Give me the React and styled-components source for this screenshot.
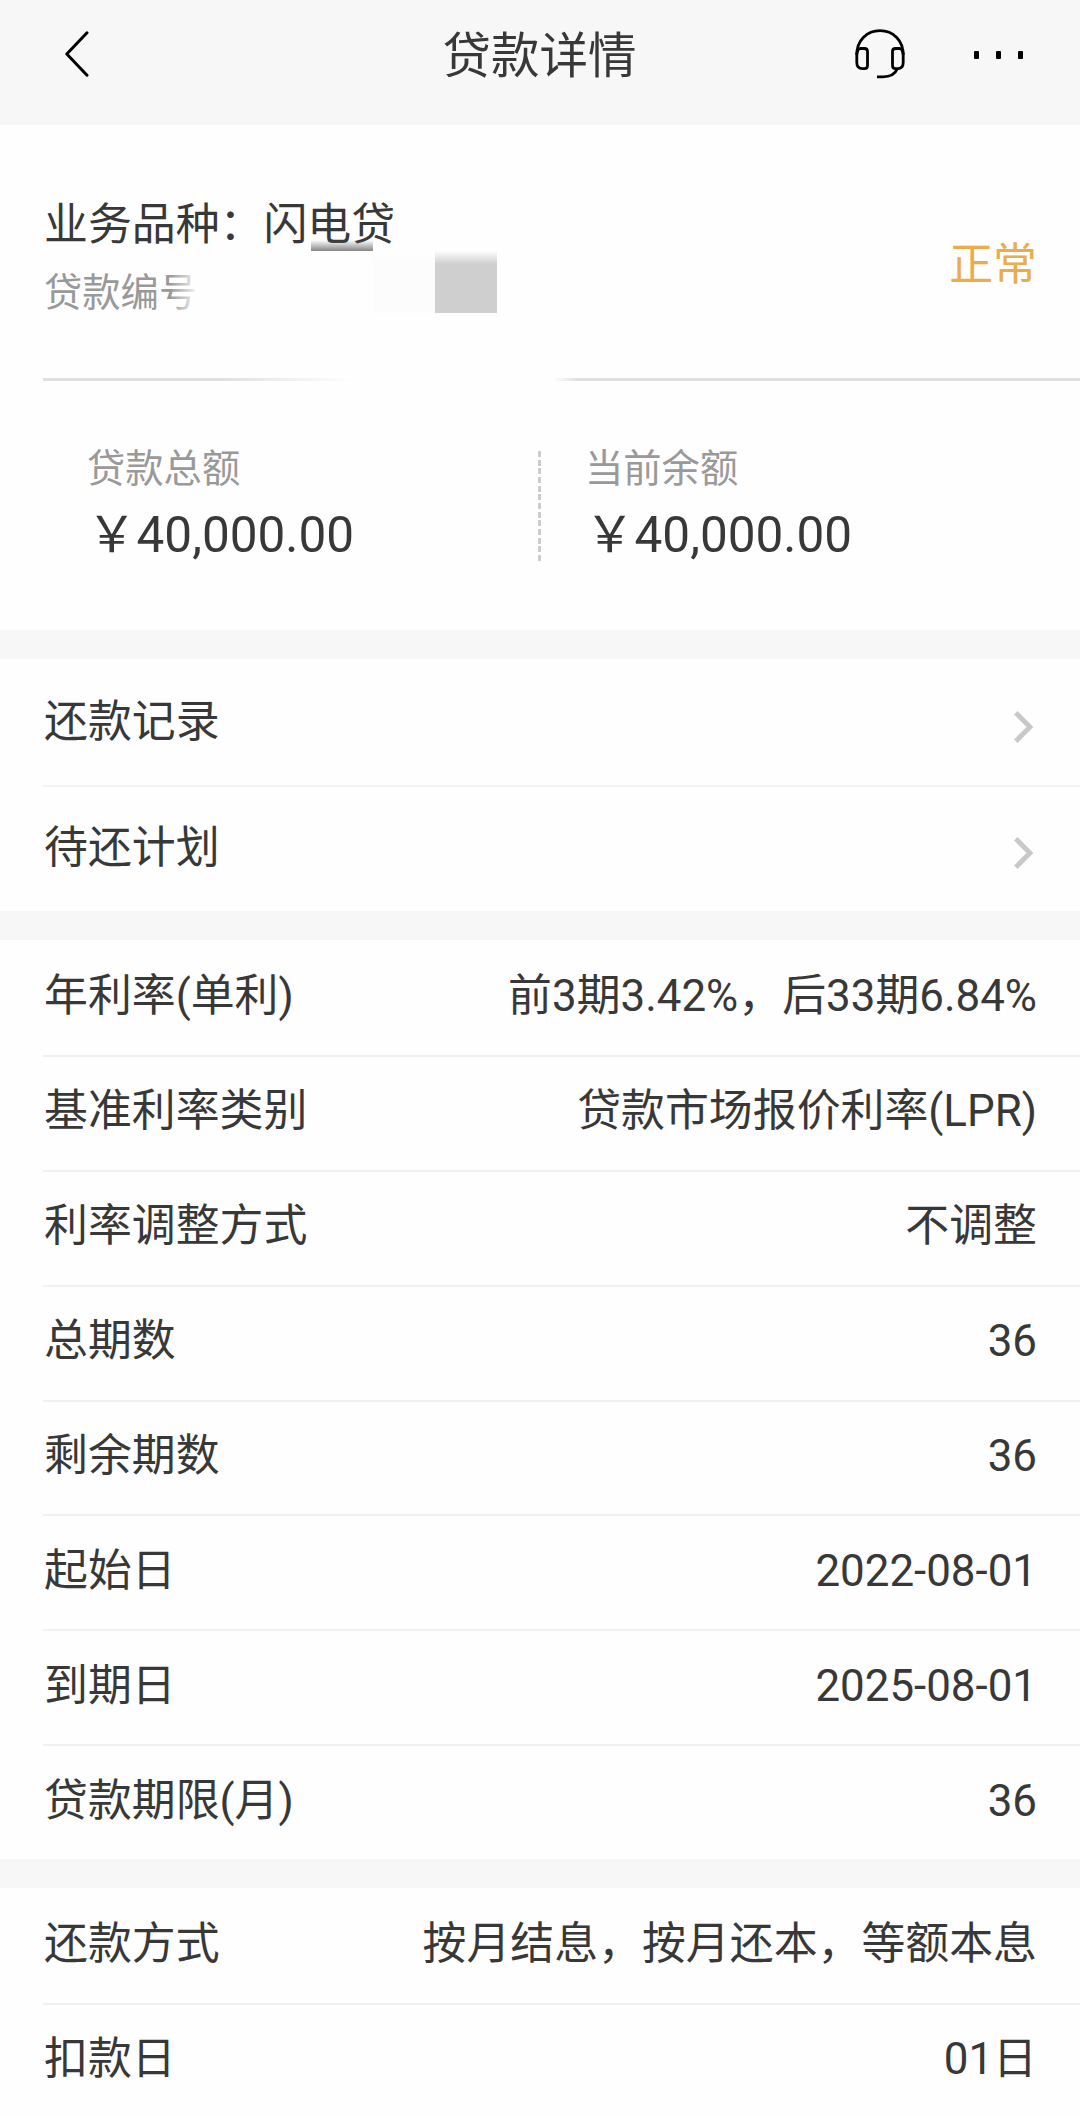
import React from 'react'
import styled, { createGlobalStyle } from 'styled-components'

const rateRows = [
  { label: '年利率(单利)', value: '前3期3.42%，后33期6.84%' },
  { label: '基准利率类别', value: '贷款市场报价利率(LPR)' },
  { label: '利率调整方式', value: '不调整' },
  { label: '总期数', value: '36' },
  { label: '剩余期数', value: '36' },
  { label: '起始日', value: '2022-08-01' },
  { label: '到期日', value: '2025-08-01' },
  { label: '贷款期限(月)', value: '36' },
]

const repayRows = [
  { label: '还款方式', value: '按月结息，按月还本，等额本息' },
  { label: '扣款日', value: '01日' },
]

const BackIcon = () => (
  <svg width="24" height="46" viewBox="0 0 24 46" fill="none" stroke="#000" strokeWidth="3" strokeLinecap="round" strokeLinejoin="round">
    <path d="M22 1.8L1.8 23L22 44.2" />
  </svg>
)

const HeadsetIcon = () => (
  <svg width="50" height="50" viewBox="0 0 50 50" fill="none" stroke="#000" strokeWidth="2.8" strokeLinejoin="round">
    <path d="M1.8 26C1.8 11 12 1.6 25 1.6S48.2 11 48.2 26" />
    <path d="M5.5 19.5H9.5Q12.5 19.5 12.5 22.5V36.5Q12.5 39.6 9.5 39.6H7.5Q1.8 39.6 1.8 33.5V24.5Q2.6 19.5 5.5 19.5Z" />
    <path d="M44.5 19.5H40.5Q37.5 19.5 37.5 22.5V36.5Q37.5 39.6 40.5 39.6H42.5Q48.2 39.6 48.2 33.5V24.5Q47.4 19.5 44.5 19.5Z" />
    <path d="M42.5 39.5C40 45.5 35 47.8 28 47.8H22" />
  </svg>
)

const ChevronIcon = () => (
  <svg width="20" height="32" viewBox="0 0 20 32" fill="none" stroke="#c8c8c8" strokeWidth="4.8">
    <path d="M1.8 1.8L16 16L1.8 30.2" />
  </svg>
)

const DetailList = ({ rows }) => (
  <Section>
    {rows.map((row) => (
      <Row key={row.label}>
        <span>{row.label}</span>
        <span>{row.value}</span>
      </Row>
    ))}
  </Section>
)

const App = () => {
  return (
    <Page>
      <GlobalStyle />
      <Header>
        <BackButton><BackIcon /></BackButton>
        <Title>贷款详情</Title>
        <Actions>
          <HeadsetIcon />
          <MoreDots><i /><i /><i /></MoreDots>
        </Actions>
      </Header>

      <Summary>
        <div>
          <Product>业务品种：闪电贷</Product>
          <LoanNo>贷款编号</LoanNo>
        </div>
        <Status>正常</Status>
        <TextSmudge />
        <Fade />
        <Block $left="373px" $color="#fcfcfc" />
        <Block $left="435px" $color="#cfcfcf" />
      </Summary>

      <Amounts>
        <Amount>
          <AmountLabel>贷款总额</AmountLabel>
          <Money>￥40,000.00</Money>
        </Amount>
        <DashedLine />
        <Amount>
          <AmountLabel>当前余额</AmountLabel>
          <Money>￥40,000.00</Money>
        </Amount>
      </Amounts>

      <Section>
        <LinkRow><span>还款记录</span><ChevronIcon /></LinkRow>
        <LinkRow><span>待还计划</span><ChevronIcon /></LinkRow>
      </Section>
      <DetailList rows={rateRows} />
      <DetailList rows={repayRows} />
    </Page>
  )
}

const GlobalStyle = createGlobalStyle`
  * {
    box-sizing: border-box;
  }
  body {
    margin: 0;
    background-color: #fefefe;
  }
`;

const Page = styled.div`
  width: 1080px;
  height: 2116px;
  overflow: hidden;
  background-color: #fefefe;
  color: #383838;
  font-family: Roboto, "Noto Sans CJK SC", sans-serif;
  font-size: 43.9px;
  line-height: 60px;
  white-space: nowrap;
`;

const Header = styled.header`
  display: grid;
  grid-template-columns: 1fr auto 1fr;
  align-items: center;
  height: 125px;
  padding: 0 57px 18px 65px;
  background-color: #f7f7f7;
`;

const BackButton = styled.div`
  display: flex;
`;

const Title = styled.h1`
  margin: 7px 0 0 -9px;
  font-size: 48.5px;
  font-weight: 400;
`;

const Actions = styled.div`
  display: flex;
  justify-content: flex-end;
  align-items: center;
  gap: 69px;
`;

const MoreDots = styled.div`
  display: flex;
  gap: 17px;
  padding-top: 2px;
  i {
    width: 5px;
    height: 8px;
    border-radius: 1px;
    background-color: #000;
  }
`;

const Summary = styled.section`
  position: relative;
  display: flex;
  justify-content: space-between;
  height: 253px;
  padding: 70px 43px 0 44px;
`;

const Product = styled.div`
  height: 68px;
`;

const LoanNo = styled.div`
  font-size: 38.3px;
  color: #999;
`;

const Status = styled.div`
  padding-top: 40px;
  color: #e9ad4c;
`;

/* mosaic pieces hiding the loan number */
const TextSmudge = styled.div`
  position: absolute;
  left: 311px;
  top: 115px;
  width: 62px;
  height: 11px;
  background: linear-gradient(rgba(120, 120, 120, 0), rgba(120, 120, 120, 0.9));
`;

const Fade = styled.div`
  position: absolute;
  left: 170px;
  top: 142px;
  width: 40px;
  height: 46px;
  background: linear-gradient(to right, rgba(254, 254, 254, 0), #fefefe 75%);
`;

const Block = styled.div`
  position: absolute;
  left: ${({ $left }) => $left};
  top: 126px;
  width: 62px;
  height: 62px;
  background: linear-gradient(#fefefe, ${({ $color }) => $color} 13px);
`;

const Amounts = styled.section`
  display: flex;
  height: 252px;
  padding-top: 71px;
  background: linear-gradient(to right, #e0e0e0 180px, #fefefe 310px, #fefefe 510px, #e0e0e0 535px) 43px 0 / 100% 3px no-repeat;
`;

const Amount = styled.div`
  width: 451px;
  margin-left: 87px;
  &:last-child {
    margin-left: 44px;
  }
`;

const AmountLabel = styled.div`
  height: 56px;
  font-size: 38.3px;
  line-height: 40px;
  color: #999;
`;

const Money = styled.div`
  font-size: 49.5px;
`;

const DashedLine = styled.div`
  width: 3px;
  height: 110px;
  margin-top: 2px;
  background: repeating-linear-gradient(#ccc 0 6px, transparent 6px 8.67px);
`;

const Section = styled.section`
  border-top: 29px solid #f7f7f7;
  padding-left: 43px;
`;

const Row = styled.div`
  display: flex;
  justify-content: space-between;
  align-items: center;
  height: 114.875px;
  padding: 0 43px 2px 1px;
  & + & {
    padding-bottom: 4px;
    border-top: 2px solid #f1f1f1;
  }
`;

const LinkRow = styled.div`
  display: flex;
  justify-content: space-between;
  align-items: center;
  height: 128px;
  padding: 0 46px 0 1px;
  border-bottom: 2px solid #f2f2f2;
  svg {
    position: relative;
    top: 5px;
  }
  &:last-child {
    height: 124px;
    padding-bottom: 2px;
    border-bottom: none;
  }
`;

export default App
